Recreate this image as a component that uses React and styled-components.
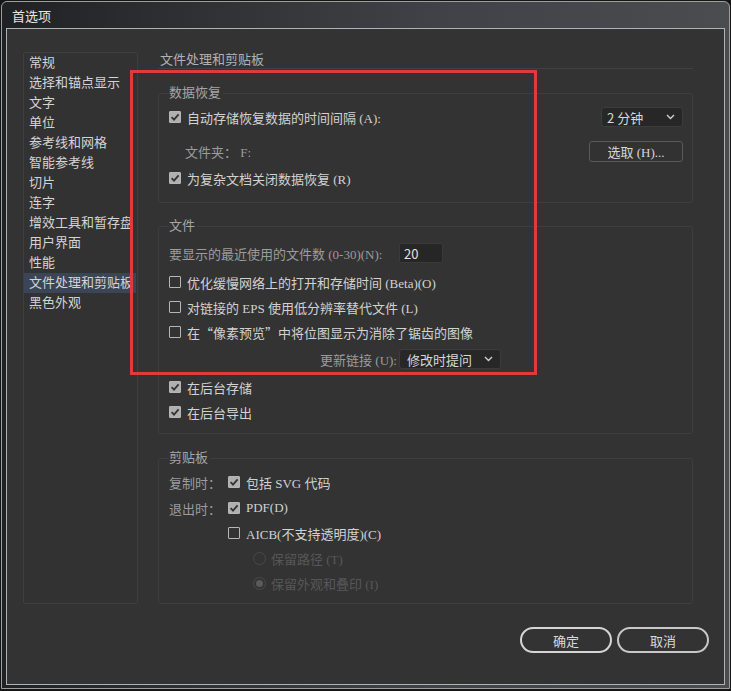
import React from 'react'
import styled, { createGlobalStyle } from 'styled-components'

const GlobalStyle = createGlobalStyle`
  html, body {
    margin: 0;
    padding: 0;
    background: #151515;
  }
  body {
    font-family: "Liberation Serif", "Noto Sans CJK SC", serif;
    font-size: 13px;
    color: #d2d2d2;
  }
`

const Screen = styled.div`
  position: relative;
  width: 731px;
  height: 691px;
  padding: 1px;
  box-sizing: border-box;
  background: #151515;
  overflow: hidden;
`

const Frame = styled.div`
  height: 688px;
  box-sizing: border-box;
  border: 1px solid #9e9e9e;
  border-radius: 6px 6px 0 0;
  background: linear-gradient(90deg, #1f2123 0%, #2c2e31 22%, #404247 60%, #4a4c50 100%);
  padding: 0 4px 3px 4px;
  display: flex;
  flex-direction: column;
`

const TitleBar = styled.div`
  height: 26px;
  display: flex;
  align-items: center;
  padding-left: 6px;
  font-family: "Noto Sans CJK SC", sans-serif;
  font-size: 13px;
  color: #e6e6e6;
`

const Content = styled.div`
  flex: 1;
  border: 1px solid #b2b2b2;
  background: #333333;
  display: flex;
  flex-direction: column;
`

const Main = styled.div`
  display: flex;
  gap: 20px;
  padding: 23px 31px 0 16px;
`

const Sidebar = styled.ul`
  list-style: none;
  margin: 0;
  padding: 0;
  width: 115px;
  height: 552px;
  box-sizing: border-box;
  border: 1px solid #3f3f3f;
  border-radius: 2px;
  background: #323232;
`

const SideItem = styled.li`
  height: 20px;
  line-height: 20px;
  padding-left: 5px;
  margin-right: 1px;
  white-space: nowrap;
  overflow: hidden;
  color: #d4d4d4;
  background: ${({ $active }) => ($active ? '#3a4657' : 'transparent')};
`

const RightCol = styled.div`
  flex: 1;
  display: flex;
  flex-direction: column;
`

const Heading = styled.div`
  height: 16px;
  line-height: 16px;
  padding-left: 2px;
  border-bottom: 1px solid #414141;
  color: #b2b2b2;
`

const Group = styled.fieldset`
  margin: ${({ $mt }) => $mt}px 0 0;
  padding: ${({ $pt }) => $pt}px 9px ${({ $pb }) => $pb}px 10px;
  border: 1px solid #3e3e3e;
  border-radius: 3px;
  min-width: 0;
`

const Legend = styled.legend`
  padding: 0 2px 0 0;
  height: 14px;
  line-height: 14px;
  color: #a6a6a6;
`

const Row = styled.div`
  display: flex;
  align-items: center;
  justify-content: ${({ $between }) => ($between ? 'space-between' : 'flex-start')};
  height: ${({ $h }) => $h || 20}px;
  margin-top: ${({ $mt }) => $mt || 0}px;
  padding-left: ${({ $indent }) => $indent || 0}px;
  white-space: nowrap;
`

const Label = styled.span`
  color: ${({ $muted, $disabled }) => ($disabled ? '#575757' : $muted ? '#9c9c9c' : '#d2d2d2')};
  padding-left: ${({ $pl }) => $pl || 0}px;
`

const Cjk = styled.span`
  font-family: "Noto Sans CJK SC", sans-serif;
`

const FieldLabel = styled.span`
  width: ${({ $w }) => $w}px;
  text-align: ${({ $right }) => ($right ? 'right' : 'left')};
  color: #9c9c9c;
  flex-shrink: 0;
`

const Box = styled.span`
  width: 12px;
  height: 12px;
  box-sizing: border-box;
  border: 1px solid #b6b6b6;
  border-radius: 1px;
  background: ${({ $on }) => ($on ? '#b0b0b0' : 'transparent')};
  margin-right: 6px;
  display: inline-flex;
  align-items: center;
  justify-content: center;
  flex-shrink: 0;
`

const RadioDot = styled.span`
  width: 13px;
  height: 13px;
  box-sizing: border-box;
  border-radius: 50%;
  border: 1px solid #4a4a4a;
  margin-right: 5px;
  display: inline-flex;
  align-items: center;
  justify-content: center;
  flex-shrink: 0;
  &::after {
    content: '';
    width: 7px;
    height: 7px;
    border-radius: 50%;
    background: ${({ $on }) => ($on ? '#5a5a5a' : 'transparent')};
  }
`

const Select = styled.div`
  width: ${({ $w }) => $w}px;
  height: ${({ $h }) => $h || 20}px;
  box-sizing: border-box;
  display: flex;
  align-items: center;
  justify-content: space-between;
  margin-left: ${({ $ml }) => $ml || 0}px;
  padding: 0 7px 0 ${({ $pl }) => $pl || 6}px;
  background: #272727;
  border: 1px solid #3c3c3c;
  border-radius: 3px;
  color: #d8d8d8;
  font-family: "Noto Sans CJK SC", sans-serif;
  flex-shrink: 0;
`

const NumberInput = styled.div`
  width: 44px;
  height: 20px;
  box-sizing: border-box;
  margin-left: 2px;
  padding-left: 4px;
  display: flex;
  align-items: center;
  background: #262626;
  border: 1px solid #3a3a3a;
  border-radius: 2px;
  color: #e2e2e2;
  font-family: "Noto Sans CJK SC", sans-serif;
`

const SmallButton = styled.div`
  width: 94px;
  height: 21px;
  box-sizing: border-box;
  display: flex;
  align-items: center;
  justify-content: center;
  border: 1px solid #5a5a5a;
  border-radius: 3px;
  background: #323232;
  color: #d6d6d6;
`

const Footer = styled.div`
  display: flex;
  justify-content: flex-end;
  gap: 5px;
  margin-top: 23px;
  padding-right: 15px;
`

const PillButton = styled.div`
  width: 92px;
  height: 26px;
  box-sizing: border-box;
  display: flex;
  align-items: center;
  justify-content: center;
  border: 2px solid ${({ $primary }) => ($primary ? '#d6d6d6' : '#c8c8c8')};
  border-radius: 13px;
  color: #dadada;
  font-family: "Noto Sans CJK SC", sans-serif;
`

const Highlight = styled.div`
  position: absolute;
  left: 130px;
  top: 70px;
  width: 407px;
  height: 305px;
  box-sizing: border-box;
  border: 3px solid #e23a3c;
  pointer-events: none;
`

const Chevron = () => (
  <svg width="9" height="6" viewBox="0 0 9 6">
    <path d="M1 1 L4.5 4.5 L8 1" fill="none" stroke="#cfcfcf" strokeWidth="1.4" />
  </svg>
)

function Check({ on, children, disabled }) {
  return (
    <>
      <Box $on={on}>
        {on && (
          <svg width="10" height="10" viewBox="0 0 10 10">
            <path d="M1.6 5.2 L4 7.6 L8.6 2.4" fill="none" stroke="#333" strokeWidth="1.8" />
          </svg>
        )}
      </Box>
      <Label $disabled={disabled}>{children}</Label>
    </>
  )
}

const sections = [
  '常规', '选择和锚点显示', '文字', '单位', '参考线和网格', '智能参考线', '切片',
  '连字', '增效工具和暂存盘', '用户界面', '性能', '文件处理和剪贴板', '黑色外观',
]

export default function App() {
  return (
    <Screen>
      <GlobalStyle />
      <Frame>
        <TitleBar>首选项</TitleBar>
        <Content>
          <Main>
            <Sidebar>
              {sections.map(s => (
                <SideItem key={s} $active={s === '文件处理和剪贴板'}>{s}</SideItem>
              ))}
            </Sidebar>

            <RightCol>
              <Heading>文件处理和剪贴板</Heading>

              <Group $mt={17} $pt={6} $pb={14}>
                <Legend>数据恢复</Legend>
                <Row $between $h={22}>
                  <Row>
                    <Check on>自动存储恢复数据的时间间隔 (A):</Check>
                  </Row>
                  <Select $w={82} $pl={5}>2 分钟<Chevron /></Select>
                </Row>
                <Row $between $h={21} $mt={13}>
                  <Label $muted $pl={16}>文件夹： F:</Label>
                  <SmallButton>选取 (H)...</SmallButton>
                </Row>
                <Row $mt={6}>
                  <Check on>为复杂文档关闭数据恢复 (R)</Check>
                </Row>
              </Group>

              <Group $mt={16} $pt={10} $pb={11}>
                <Legend>文件</Legend>
                <Row>
                  <FieldLabel $w={228}>要显示的最近使用的文件数 (0-30)(N):</FieldLabel>
                  <NumberInput>20</NumberInput>
                </Row>
                <Row $mt={9}>
                  <Check>优化缓慢网络上的打开和存储时间 (Beta)(O)</Check>
                </Row>
                <Row $mt={5}>
                  <Check>对链接的 EPS 使用低分辨率替代文件 (L)</Check>
                </Row>
                <Row $mt={5}>
                  <Check>在<Cjk>“</Cjk>像素预览<Cjk>”</Cjk>中将位图显示为消除了锯齿的图像</Check>
                </Row>
                <Row $mt={7}>
                  <FieldLabel $w={228} $right>更新链接 (U):</FieldLabel>
                  <Select $w={102} $pl={7} $ml={2}>修改时提问<Chevron /></Select>
                </Row>
                <Row $mt={8}>
                  <Check on>在后台存储</Check>
                </Row>
                <Row $mt={5}>
                  <Check on>在后台导出</Check>
                </Row>
              </Group>

              <Group $mt={17} $pt={7} $pb={10}>
                <Legend>剪贴板</Legend>
                <Row>
                  <FieldLabel $w={59}>复制时：</FieldLabel>
                  <Check on>包括 SVG 代码</Check>
                </Row>
                <Row $mt={6}>
                  <FieldLabel $w={59}>退出时：</FieldLabel>
                  <Check on>PDF(D)</Check>
                </Row>
                <Row $mt={5} $indent={59}>
                  <Check>AICB(不支持透明度)(C)</Check>
                </Row>
                <Row $mt={5} $indent={84}>
                  <RadioDot />
                  <Label $disabled>保留路径 (T)</Label>
                </Row>
                <Row $mt={5} $indent={84}>
                  <RadioDot $on />
                  <Label $disabled>保留外观和叠印 (I)</Label>
                </Row>
              </Group>
            </RightCol>
          </Main>

          <Footer>
            <PillButton $primary>确定</PillButton>
            <PillButton>取消</PillButton>
          </Footer>
        </Content>
      </Frame>
      <Highlight />
    </Screen>
  )
}
